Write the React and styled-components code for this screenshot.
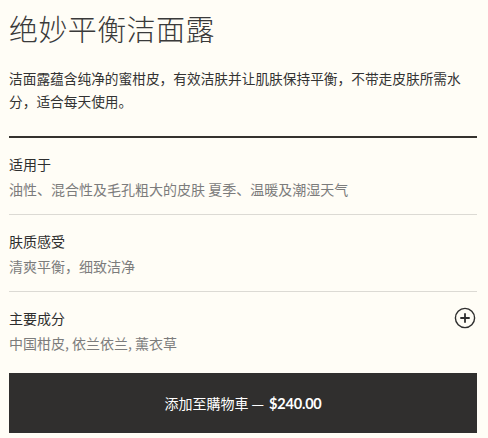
import React from "react";
import styled, { createGlobalStyle } from "styled-components";

const Global = createGlobalStyle`
  html, body { margin: 0; padding: 0; background: #fffdf6; }
  body { font-family: "Noto Sans CJK SC", "Noto Sans", sans-serif; color: #333; }
`;

const Page = styled.div`
  width: 468px;
  padding: 0 11px 0 9px;
  display: flex;
  flex-direction: column;
`;

const Title = styled.h1`
  margin: 10px 0 0;
  font-size: 29px;
  line-height: 36px;
  font-weight: 300;
  color: #3a3a3a;
  letter-spacing: 0.4px;
`;

const Intro = styled.p`
  margin: 21px 0 0;
  font-size: 13.7px;
  line-height: 23px;
  color: #333;
`;

const Rule = styled.hr`
  margin: 23px 0 0;
  border: none;
  height: 2px;
  background: #35322e;
`;

const Section = styled.div`
  display: flex;
  justify-content: space-between;
  align-items: flex-start;
  padding: 15px 0 14px;
  border-bottom: ${(p) => (p.$last ? "none" : "1px solid #dcdad4")};
`;

const Texts = styled.div`
  display: flex;
  flex-direction: column;
  gap: 3px;
`;

const Label = styled.div`
  font-size: 14px;
  line-height: 22px;
  color: #2e2e2e;
`;

const Value = styled.div`
  font-size: 14px;
  line-height: 22px;
  color: #7c7c7c;
`;

const PlusButton = styled.button`
  border: none;
  background: none;
  padding: 0;
  margin: 0 1px 0 0;
  width: 22px;
  height: 22px;
  display: flex;
  align-items: center;
  justify-content: center;
  cursor: pointer;
`;

const CartButton = styled.button`
  margin-top: 5px;
  height: 60px;
  width: 100%;
  border: none;
  background: #302f2e;
  color: #fff;
  font-family: "Noto Sans CJK SC", "Noto Sans", sans-serif;
  font-size: 14px;
  display: flex;
  align-items: center;
  justify-content: center;
  gap: 5px;
  cursor: pointer;
`;

const Price = styled.span`
  font-family: "Lato", "Liberation Sans", sans-serif;
  font-weight: 700;
  font-size: 14.5px;
  letter-spacing: -0.2px;
`;

const sections = [
  { label: "适用于", value: "油性、混合性及毛孔粗大的皮肤 夏季、温暖及潮湿天气" },
  { label: "肤质感受", value: "清爽平衡，细致洁净" },
  { label: "主要成分", value: "中国柑皮, 依兰依兰, 薰衣草", expandable: true },
];

export default function App() {
  return (
    <>
      <Global />
      <Page>
        <Title>绝妙平衡洁面露</Title>
        <Intro>
          洁面露蕴含纯净的蜜柑皮，有效洁肤并让肌肤保持平衡，不带走皮肤所需水分，适合每天使用。
        </Intro>
        <Rule />
        {sections.map((s, i) => (
          <Section key={s.label} $last={i === sections.length - 1}>
            <Texts>
              <Label>{s.label}</Label>
              <Value>{s.value}</Value>
            </Texts>
            {s.expandable && (
              <PlusButton aria-label="展开">
                <svg width="22" height="22" viewBox="0 0 22 22">
                  <circle cx="11" cy="11" r="9.6" fill="none" stroke="#2e2e2e" strokeWidth="1.4" />
                  <path d="M11 6.3v9.4M6.3 11h9.4" stroke="#2e2e2e" strokeWidth="1.8" />
                </svg>
              </PlusButton>
            )}
          </Section>
        ))}
        <CartButton>
          <span>添加至購物車 —</span>
          <Price>$240.00</Price>
        </CartButton>
      </Page>
    </>
  );
}
